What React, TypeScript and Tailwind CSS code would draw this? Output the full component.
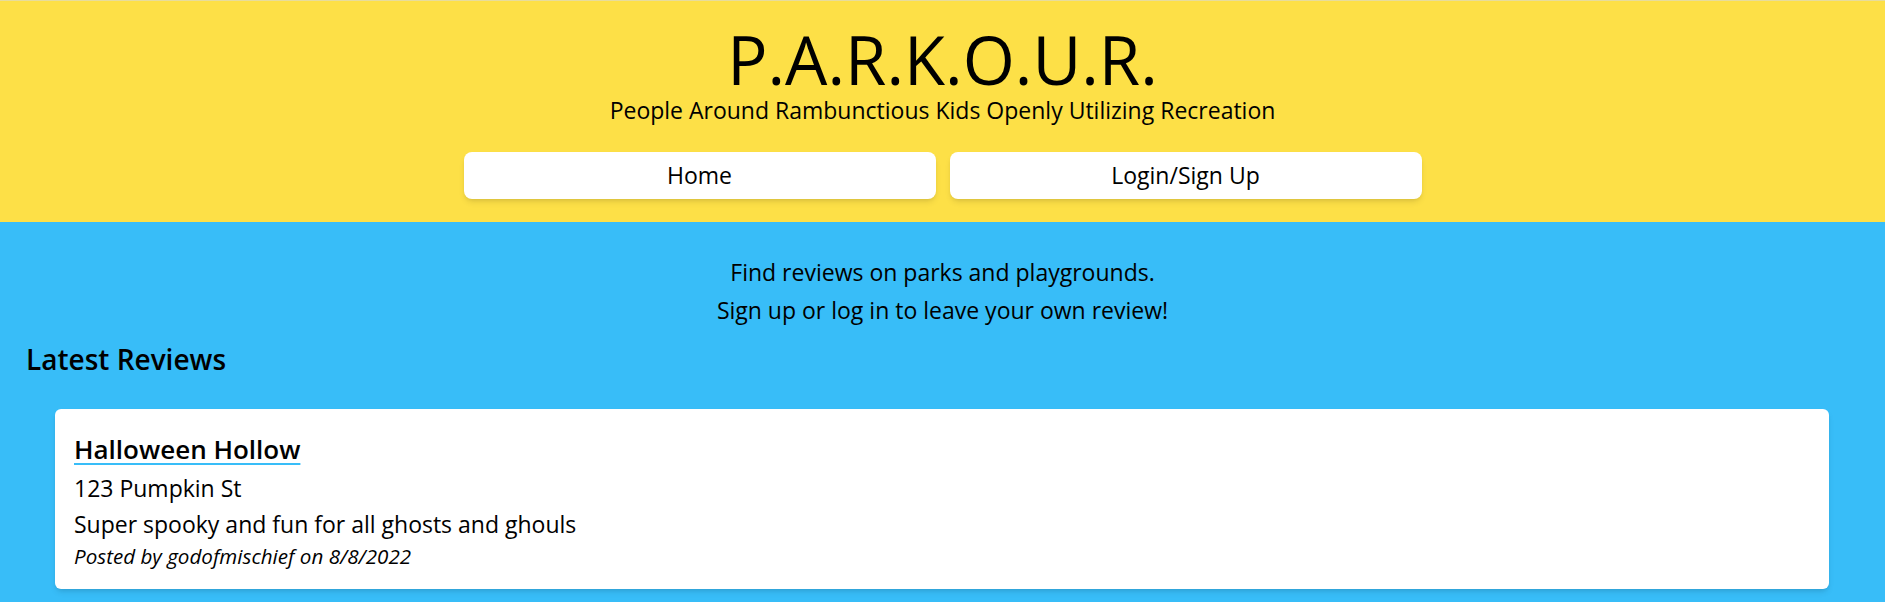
import React from "react";

const reviews = [
  {
    park: "Halloween Hollow",
    address: "123 Pumpkin St",
    text: "Super spooky and fun for all ghosts and ghouls",
    user: "godofmischief",
    date: "8/8/2022",
  },
];

const App = () => {
  return (
    <div className="min-h-screen bg-[#38bdf8] font-['Open_Sans',sans-serif] text-black">
      <header className="bg-[#fde047] border-t border-[#e7dc9c] pt-[23px] pb-[23px] text-center">
        <h1 className="text-[67px] leading-[70px]">P.A.R.K.O.U.R.</h1>
        <p className="text-[23px] leading-8">
          People Around Rambunctious Kids Openly Utilizing Recreation
        </p>
        <nav className="flex justify-center gap-[14px] mt-[26px]">
          <a
            href="#"
            className="w-[472px] h-[47px] flex items-center justify-center bg-white rounded-lg shadow-md text-[23px]"
          >
            Home
          </a>
          <a
            href="#"
            className="w-[472px] h-[47px] flex items-center justify-center bg-white rounded-lg shadow-md text-[23px]"
          >
            Login/Sign Up
          </a>
        </nav>
      </header>

      <main className="px-[26px] pb-8">
        <div className="pt-[31px] text-center text-[23px] leading-[38px]">
          <p>Find reviews on parks and playgrounds.</p>
          <p>Sign up or log in to leave your own review!</p>
        </div>
        <h2 className="mt-[12px] text-[28px] leading-9 font-semibold">
          Latest Reviews
        </h2>
        <div className="mt-[32px] flex flex-col gap-6">
          {reviews.map((r) => (
            <div
              key={r.park}
              className="ml-[29px] mr-[30px] bg-white rounded-md shadow-md pt-[21px] pb-[19px] px-[19px]"
            >
              <a
                href="#"
                className="text-[26px] leading-[38px] font-semibold underline decoration-[#38bdf8] decoration-2 underline-offset-4"
              >
                {r.park}
              </a>
              <p className="mt-[2px] text-[23px] leading-9">{r.address}</p>
              <p className="text-[23px] leading-9">{r.text}</p>
              <p className="text-[20.6px] leading-7 italic">
                Posted by {r.user} on {r.date}
              </p>
            </div>
          ))}
        </div>
      </main>
    </div>
  );
};

export default App;
